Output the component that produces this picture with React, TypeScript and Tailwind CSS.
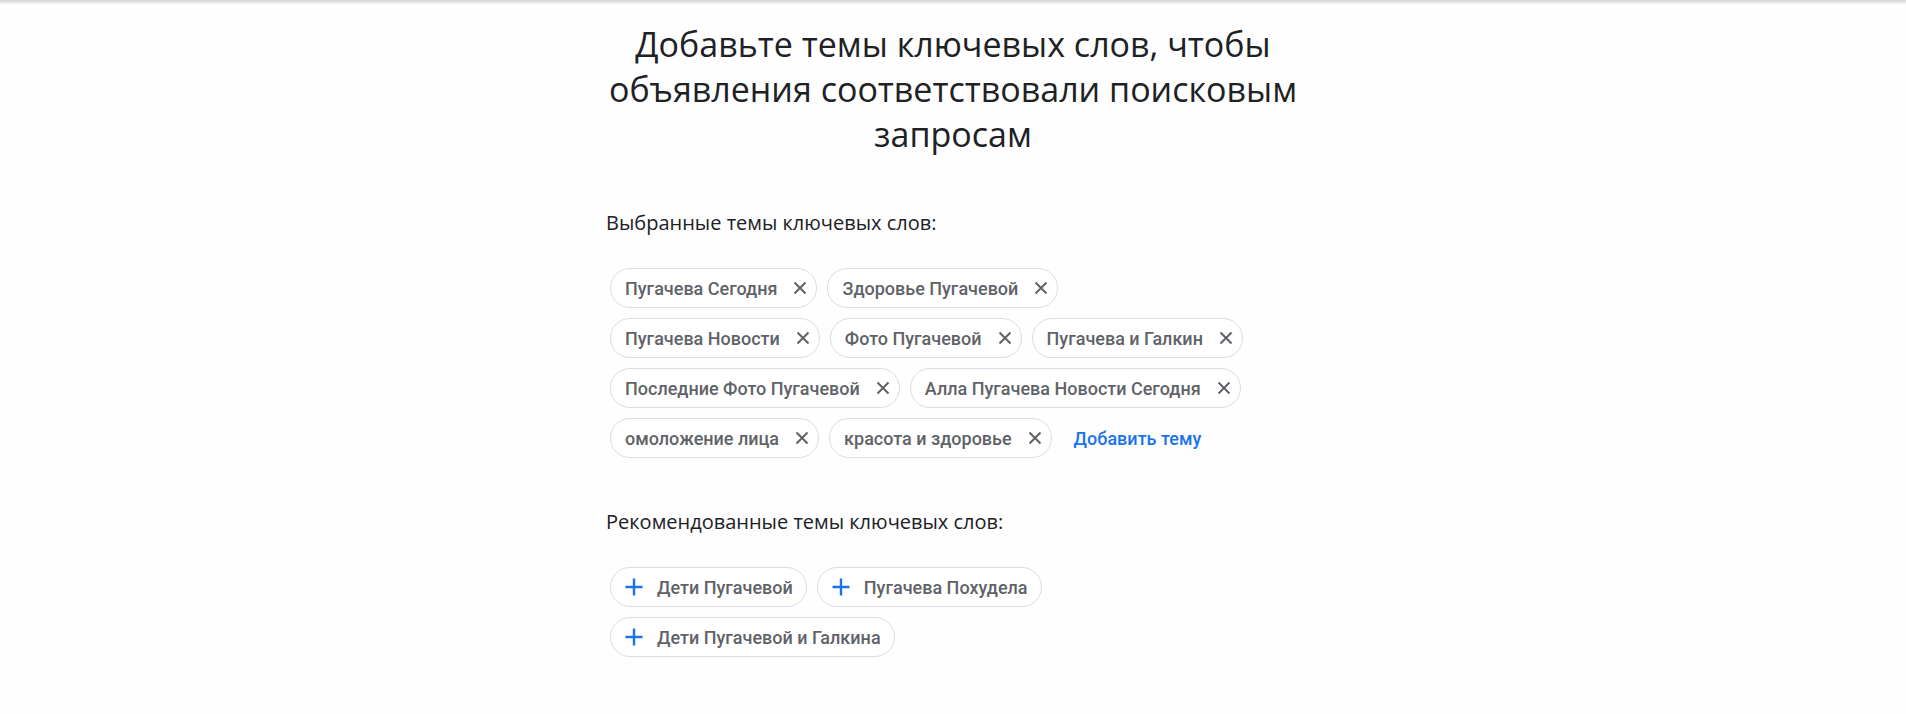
import React from "react";

const selected = [
  "Пугачева Сегодня",
  "Здоровье Пугачевой",
  "Пугачева Новости",
  "Фото Пугачевой",
  "Пугачева и Галкин",
  "Последние Фото Пугачевой",
  "Алла Пугачева Новости Сегодня",
  "омоложение лица",
  "красота и здоровье",
];

const recommended = ["Дети Пугачевой", "Пугачева Похудела", "Дети Пугачевой и Галкина"];

function CloseIcon() {
  return (
    <svg width="14" height="14" viewBox="0 0 14 14" className="shrink-0">
      <path d="M1.5 1.5 L12.5 12.5 M12.5 1.5 L1.5 12.5" stroke="#5f6368" strokeWidth="2" fill="none" />
    </svg>
  );
}

function PlusIcon() {
  return (
    <svg width="18" height="18" viewBox="0 0 18 18" className="shrink-0">
      <path d="M9 0.5 V17.5 M0.5 9 H17.5" stroke="#1a73e8" strokeWidth="2.4" fill="none" />
    </svg>
  );
}

const headFont = { fontFamily: '"Open Sans", "Noto Sans", sans-serif' };

export default function App() {
  return (
    <div className="min-h-[714px] w-full bg-[#fefefe] relative" style={{ fontFamily: "Roboto, Arial, sans-serif" }}>
      <div className="absolute top-0 left-0 right-0 h-[5px] bg-gradient-to-b from-[#d4d4d4] to-transparent" />
      <div className="flex flex-col items-center">
        <h1
          className="pt-[22px] text-center text-[34px] leading-[45px] font-normal text-[#202124]"
          style={headFont}
        >
          Добавьте темы ключевых слов, чтобы
          <br />
          объявления соответствовали поисковым
          <br />
          запросам
        </h1>
        <div className="w-[694px] mt-[52px]">
          <div className="text-[20px] leading-[28px] text-[#202124]" style={headFont}>
            Выбранные темы ключевых слов:
          </div>
          <div className="mt-[31px] ml-[4px] w-[650px] flex flex-wrap items-center gap-[10px]">
            {selected.map((s) => (
              <div
                key={s}
                className="h-[40px] flex items-center rounded-full border border-[#dadce0] bg-white pl-[14px] pr-[9px] text-[18px] font-medium text-[#5f6368]"
              >
                <span className="whitespace-nowrap">{s}</span>
                <span className="ml-[16px] flex items-center">
                  <CloseIcon />
                </span>
              </div>
            ))}
            <button className="ml-[12px] h-[40px] text-[18px] font-medium text-[#1a73e8]">Добавить тему</button>
          </div>
          <div className="mt-[50px] text-[20px] leading-[28px] text-[#202124]" style={headFont}>
            Рекомендованные темы ключевых слов:
          </div>
          <div className="mt-[31px] ml-[4px] w-[650px] flex flex-wrap items-center gap-[10px]">
            {recommended.map((s, i) => (
              <div
                key={s}
                className={
                  "h-[40px] flex items-center rounded-full border border-[#dadce0] bg-white pl-[14px] pr-[13px] text-[18px] font-medium text-[#5f6368]" +
                  (i === 2 ? " mr-[200px]" : "")
                }
              >
                <PlusIcon />
                <span className="ml-[14px] whitespace-nowrap">{s}</span>
              </div>
            ))}
          </div>
        </div>
      </div>
    </div>
  );
}
